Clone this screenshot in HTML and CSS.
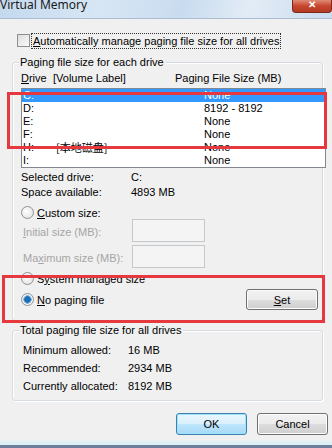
FILE: index.html
```html
<!DOCTYPE html>
<html lang="en">
<head>
    <meta charset="UTF-8">
    <title>Virtual Memory</title>
    <link rel="stylesheet" href="styles.css">
</head>
<body>
    <div class="window">
        <div class="titlebar">
            <span class="title">Virtual Memory</span>
            <span class="close-btn">&#x2715;</span>
        </div>

        <div class="content">
            <div class="auto-row">
                <span class="checkbox"></span>
                <span class="focus-label"><u>A</u>utomatically manage paging file size for all drives</span>
            </div>

            <div class="group group-drives">
                <div class="group-title">Paging file size for each drive</div>
                <div class="list-head">
                    <span class="col-drive"><u>D</u>rive</span>
                    <span class="col-label">[Volume Label]</span>
                    <span class="col-size">Paging File Size (MB)</span>
                </div>
                <div class="listbox">
                    <div class="row selected"><span class="c-drive">C:</span><span class="c-label"></span><span class="c-size">None</span></div>
                    <div class="row"><span class="c-drive">D:</span><span class="c-label"></span><span class="c-size">8192 - 8192</span></div>
                    <div class="row"><span class="c-drive">E:</span><span class="c-label"></span><span class="c-size">None</span></div>
                    <div class="row"><span class="c-drive">F:</span><span class="c-label"></span><span class="c-size">None</span></div>
                    <div class="row"><span class="c-drive">H:</span><span class="c-label cjk">[本地磁盘]</span><span class="c-size">None</span></div>
                    <div class="row"><span class="c-drive">I:</span><span class="c-label"></span><span class="c-size">None</span></div>
                </div>

                <div class="info">
                    <span>Selected drive:</span><span>C:</span>
                    <span>Space available:</span><span>4893 MB</span>
                </div>

                <div class="radio-row custom-row">
                    <span class="radio"></span>
                    <span><u>C</u>ustom size:</span>
                </div>
                <div class="size-row first">
                    <span class="disabled"><u>I</u>nitial size (MB):</span>
                    <span class="textbox"></span>
                </div>
                <div class="size-row">
                    <span class="disabled">Ma<u>x</u>imum size (MB):</span>
                    <span class="textbox"></span>
                </div>

                <div class="radio-row system-row">
                    <span class="radio"></span>
                    <span>S<u>y</u>stem managed size</span>
                </div>
                <div class="radio-row nopaging-row">
                    <span class="radio checked"></span>
                    <span><u>N</u>o paging file</span>
                    <button class="btn set-btn"><u>S</u>et</button>
                </div>
            </div>

            <div class="group group-total">
                <div class="group-title">Total paging file size for all drives</div>
                <div class="totals">
                    <span>Minimum allowed:</span><span>16 MB</span>
                    <span>Recommended:</span><span>2934 MB</span>
                    <span>Currently allocated:</span><span>8192 MB</span>
                </div>
            </div>

            <div class="actions">
                <button class="btn default-btn">OK</button>
                <button class="btn">Cancel</button>
            </div>
        </div>

        <div class="bottom-edge"></div>

        <!-- red marks drawn over the screenshot -->
        <div class="mark mark-list"></div>
        <div class="mark mark-radio"></div>
    </div>
</body>
</html>
```

FILE: styles.css
```css
* {
    margin: 0;
    padding: 0;
    box-sizing: border-box;
}
body {
    font-family: 'Liberation Sans', Arial, 'Noto Sans CJK SC', sans-serif;
    font-size: 11px;
    color: #000;
    background: #f0f0f0;
}
u {
    text-decoration: underline;
    text-underline-offset: 1px;
}
.window {
    position: relative;
    width: 332px;
    height: 448px;
    overflow: hidden;
    background: #f0f0f0;
    display: flex;
    flex-direction: column;
    white-space: nowrap;
}
.titlebar {
    height: 19px;
    flex: none;
    display: flex;
    justify-content: space-between;
    align-items: flex-start;
    background: linear-gradient(100deg, #c4d9ee 0%, #d7e6f4 30%, #c9dcef 55%, #e2ecf6 75%, #cbdcee 100%);
    border-bottom: 1px solid #a9bdd3;
}
.title {
    font-family: 'Noto Sans', 'Liberation Sans', sans-serif;
    font-size: 12px;
    line-height: 12px;
    margin-top: -1px;
    color: #1a1a1a;
}
.close-btn {
    width: 40px;
    height: 13px;
    background: linear-gradient(#e08a77, #c7452e 50%, #b33a22);
    border: 1px solid #7b2a1c;
    border-top: none;
    border-radius: 0 0 4px 4px;
    color: #fff;
    font-size: 10px;
    line-height: 9px;
    text-align: center;
    font-weight: bold;
}
.content {
    flex: 1;
    padding: 14px 0 0 0;
}
.auto-row {
    display: flex;
    align-items: center;
    height: 15px;
    padding-left: 17px;
}
.checkbox {
    width: 13px;
    height: 13px;
    border: 1px solid #8f8f8f;
    background: linear-gradient(135deg, #dcdcdc, #fbfbfb);
    margin-right: 2px;
}
.focus-label {
    outline: 1px dotted #333;
    line-height: 14px;
    padding: 0 1px;
}

.group {
    margin-left: 12px;
    width: 311px;
    border: 1px solid #d5dbe0;
    border-radius: 3px;
    box-shadow: inset 1px 1px 0 #fff, 1px 1px 0 #fff;
}
.group-title {
    width: fit-content;
    margin: -8px 0 0 6px;
    padding: 0 2px 0 1px;
    line-height: 14px;
    background: #f0f0f0;
}
.group-drives {
    margin-top: 14px;
    height: 259px;
}
.list-head {
    display: flex;
    height: 15px;
    line-height: 15px;
    margin-top: 2px;
    padding-left: 8px;
}
.col-drive {
    width: 32px;
}
.col-label {
    width: 122px;
}
.listbox {
    margin: 2px 0 0 8px;
    width: 305px;
    height: 80px;
    border: 1px solid #828790;
    background: #fff;
}
.row {
    display: flex;
    height: 13px;
    line-height: 13px;
    padding-left: 1px;
}
.row.selected {
    background: #3399ff;
    color: #fff;
}
.c-drive {
    width: 33px;
}
.c-label {
    width: 148px;
}
.cjk {
    font-family: 'Noto Sans CJK SC', sans-serif;
    font-size: 11px;
}
.info, .totals {
    display: grid;
    grid-template-columns: 110px auto;
    padding-left: 8px;
    line-height: 15px;
}
.info {
    margin-top: 2px;
}
.radio-row {
    display: flex;
    align-items: center;
    padding-left: 8px;
}
.radio {
    width: 13px;
    height: 13px;
    border-radius: 50%;
    border: 1px solid #929292;
    background: radial-gradient(circle at 40% 40%, #fff, #dcdcdc);
    margin-right: 3px;
}
.radio.checked {
    background: radial-gradient(circle, #1f6fb5 0 3px, #7fb7e6 3.5px 4px, #f3f3f3 4.5px);
}
.custom-row {
    margin-top: 6px;
    height: 13px;
}
.size-row {
    display: flex;
    align-items: center;
    height: 23px;
    margin-top: 3px;
    padding-left: 10px;
}
.size-row.first {
    margin-top: 0;
}
.disabled {
    width: 109px;
    padding-top: 2px;
    color: #a5a5a5;
}
.textbox {
    width: 73px;
    height: 23px;
    border: 1px solid #c6c9cc;
    background: #f4f4f4;
}
.system-row {
    margin-top: 4px;
    height: 13px;
}
.nopaging-row {
    margin-top: 4px;
    height: 21px;
}
.btn {
    font-family: inherit;
    font-size: 11px;
    color: #000;
    height: 22px;
    border: 1px solid #707070;
    border-radius: 3px;
    background: linear-gradient(#f2f2f2 0%, #ebebeb 50%, #dddddd 51%, #cfcfcf 100%);
    box-shadow: inset 0 0 0 1px #fcfcfc;
}
.set-btn {
    margin-left: auto;
    margin-right: 4px;
    width: 72px;
    height: 21px;
}
.group-total {
    margin-top: 9px;
    height: 71px;
}
.totals {
    margin-top: 4px;
    line-height: 18px;
    padding-left: 10px;
    grid-template-columns: 105px auto;
}
.actions {
    display: flex;
    justify-content: flex-end;
    gap: 10px;
    margin-top: 12px;
    padding-right: 4px;
}
.actions .btn {
    width: 71px;
}
.default-btn {
    border-color: #3c7fb1;
    background: linear-gradient(#eaf6fd 0%, #d9f0fc 50%, #bee6fd 51%, #a7d9f5 100%);
    box-shadow: inset 0 0 0 1px #9ee4ff;
}
.bottom-edge {
    height: 8px;
    flex: none;
    background: linear-gradient(#f0f0f0 0 1px, #dff0f6 1px 5px, #6e7f9c 5px);
}
.mark {
    position: absolute;
    border: 3px solid #e5393f;
}
.mark-list {
    left: 7px;
    top: 92px;
    width: 320px;
    height: 57px;
}
.mark-radio {
    left: 2px;
    top: 275px;
    width: 323px;
    height: 48px;
}
```
